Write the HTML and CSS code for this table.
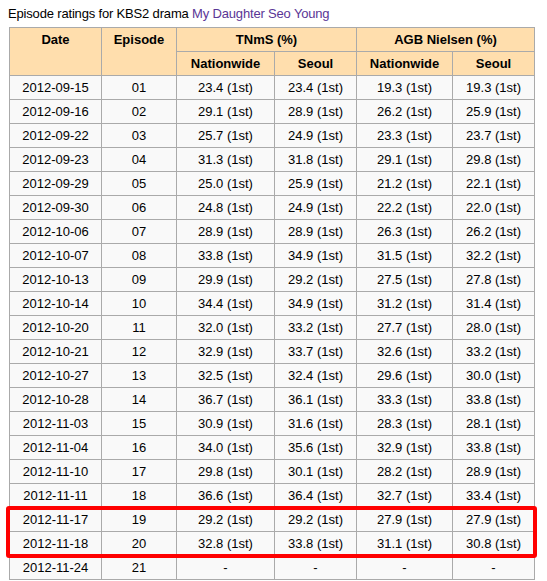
FILE: index.html
```html
<!DOCTYPE html>
<html>
<head>
<meta charset="utf-8">
<link rel="stylesheet" href="styles.css">
</head>
<body>
<div class="page">
  <div class="caption">Episode ratings for KBS2 drama <a class="link" href="#">My Daughter Seo Young</a></div>
  <table class="ratings">
    <colgroup>
      <col class="c-date"><col class="c-ep"><col class="c-tn"><col class="c-ts"><col class="c-an"><col class="c-as">
    </colgroup>
    <thead>
      <tr>
        <th rowspan="2" class="top">Date</th>
        <th rowspan="2" class="top">Episode</th>
        <th colspan="2">TNmS (%)</th>
        <th colspan="2">AGB Nielsen (%)</th>
      </tr>
      <tr>
        <th>Nationwide</th><th>Seoul</th><th>Nationwide</th><th>Seoul</th>
      </tr>
    </thead>
    <tbody>
      <tr><td>2012-09-15</td><td>01</td><td>23.4 (1st)</td><td>23.4 (1st)</td><td>19.3 (1st)</td><td>19.3 (1st)</td></tr>
      <tr><td>2012-09-16</td><td>02</td><td>29.1 (1st)</td><td>28.9 (1st)</td><td>26.2 (1st)</td><td>25.9 (1st)</td></tr>
      <tr><td>2012-09-22</td><td>03</td><td>25.7 (1st)</td><td>24.9 (1st)</td><td>23.3 (1st)</td><td>23.7 (1st)</td></tr>
      <tr><td>2012-09-23</td><td>04</td><td>31.3 (1st)</td><td>31.8 (1st)</td><td>29.1 (1st)</td><td>29.8 (1st)</td></tr>
      <tr><td>2012-09-29</td><td>05</td><td>25.0 (1st)</td><td>25.9 (1st)</td><td>21.2 (1st)</td><td>22.1 (1st)</td></tr>
      <tr><td>2012-09-30</td><td>06</td><td>24.8 (1st)</td><td>24.9 (1st)</td><td>22.2 (1st)</td><td>22.0 (1st)</td></tr>
      <tr><td>2012-10-06</td><td>07</td><td>28.9 (1st)</td><td>28.9 (1st)</td><td>26.3 (1st)</td><td>26.2 (1st)</td></tr>
      <tr><td>2012-10-07</td><td>08</td><td>33.8 (1st)</td><td>34.9 (1st)</td><td>31.5 (1st)</td><td>32.2 (1st)</td></tr>
      <tr><td>2012-10-13</td><td>09</td><td>29.9 (1st)</td><td>29.2 (1st)</td><td>27.5 (1st)</td><td>27.8 (1st)</td></tr>
      <tr><td>2012-10-14</td><td>10</td><td>34.4 (1st)</td><td>34.9 (1st)</td><td>31.2 (1st)</td><td>31.4 (1st)</td></tr>
      <tr><td>2012-10-20</td><td>11</td><td>32.0 (1st)</td><td>33.2 (1st)</td><td>27.7 (1st)</td><td>28.0 (1st)</td></tr>
      <tr><td>2012-10-21</td><td>12</td><td>32.9 (1st)</td><td>33.7 (1st)</td><td>32.6 (1st)</td><td>33.2 (1st)</td></tr>
      <tr><td>2012-10-27</td><td>13</td><td>32.5 (1st)</td><td>32.4 (1st)</td><td>29.6 (1st)</td><td>30.0 (1st)</td></tr>
      <tr><td>2012-10-28</td><td>14</td><td>36.7 (1st)</td><td>36.1 (1st)</td><td>33.3 (1st)</td><td>33.8 (1st)</td></tr>
      <tr><td>2012-11-03</td><td>15</td><td>30.9 (1st)</td><td>31.6 (1st)</td><td>28.3 (1st)</td><td>28.1 (1st)</td></tr>
      <tr><td>2012-11-04</td><td>16</td><td>34.0 (1st)</td><td>35.6 (1st)</td><td>32.9 (1st)</td><td>33.8 (1st)</td></tr>
      <tr><td>2012-11-10</td><td>17</td><td>29.8 (1st)</td><td>30.1 (1st)</td><td>28.2 (1st)</td><td>28.9 (1st)</td></tr>
      <tr><td>2012-11-11</td><td>18</td><td>36.6 (1st)</td><td>36.4 (1st)</td><td>32.7 (1st)</td><td>33.4 (1st)</td></tr>
      <tr><td>2012-11-17</td><td>19</td><td>29.2 (1st)</td><td>29.2 (1st)</td><td>27.9 (1st)</td><td>27.9 (1st)</td></tr>
      <tr><td>2012-11-18</td><td>20</td><td>32.8 (1st)</td><td>33.8 (1st)</td><td>31.1 (1st)</td><td>30.8 (1st)</td></tr>
      <tr><td>2012-11-24</td><td>21</td><td>-</td><td>-</td><td>-</td><td>-</td></tr>
    </tbody>
  </table>
  <div class="highlight"></div>
</div>
</body>
</html>
```

FILE: styles.css
```css
html, body {
  margin: 0;
  padding: 0;
  background: #ffffff;
}
.page {
  position: relative;
  padding-left: 8px;
  font-family: "Liberation Sans", Arial, sans-serif;
  font-size: 13px;
  color: #000000;
}
.caption {
  padding-top: 6px;
  line-height: 15px;
  letter-spacing: -0.17px;
}
.link {
  color: #5a3696;
  text-decoration: none;
}
.ratings {
  margin-top: 6px;
  margin-left: 1px;
  border-collapse: separate;
  border-spacing: 0;
  table-layout: fixed;
  width: 526px;
  border-top: 1px solid #aaaaaa;
  border-left: 1px solid #aaaaaa;
}
.c-date { width: 92px; }
.c-ep { width: 75px; }
.c-tn { width: 98px; }
.c-ts { width: 82px; }
.c-an { width: 96px; }
.c-as { width: 82px; }
.ratings th,
.ratings td {
  box-sizing: border-box;
  border-right: 1px solid #aaaaaa;
  border-bottom: 1px solid #aaaaaa;
  padding: 1px 0 0 0;
  line-height: 22px;
  text-align: center;
  white-space: nowrap;
}
.ratings th {
  background: #ffdead;
  font-weight: bold;
}
.ratings th.top {
  vertical-align: top;
}
.ratings td {
  background: #f9f9f9;
}
.highlight {
  position: absolute;
  left: 6px;
  top: 506px;
  width: 531px;
  height: 52px;
  box-sizing: border-box;
  border: 4px solid #ff0000;
  border-radius: 3px;
}
```
